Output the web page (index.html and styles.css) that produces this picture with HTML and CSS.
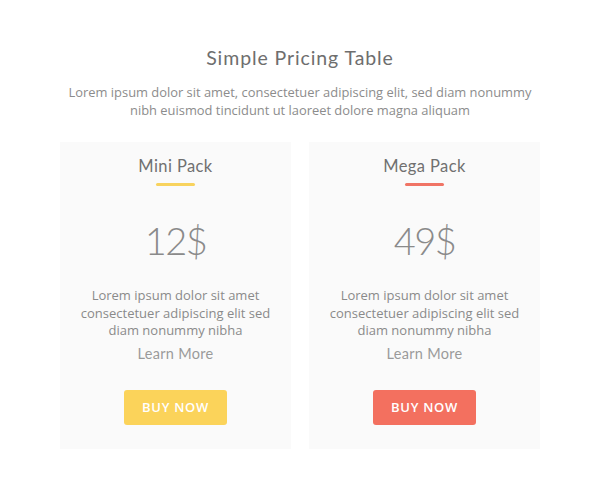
FILE: index.html
```html
<!DOCTYPE html>
<html lang="en">
<head>
<meta charset="utf-8">
<title>Simple Pricing Table</title>
<link rel="stylesheet" href="styles.css">
</head>
<body>
<main class="page">
  <h1 class="title">Simple Pricing Table</h1>
  <p class="subtitle">Lorem ipsum dolor sit amet, consectetuer adipiscing elit, sed diam nonummy nibh euismod tincidunt ut laoreet dolore magna aliquam</p>
  <div class="plans">
    <section class="card card-mini">
      <h2 class="plan-name">Mini Pack</h2>
      <div class="bar"></div>
      <div class="price">12$</div>
      <p class="desc">Lorem ipsum dolor sit amet consectetuer adipiscing elit sed diam nonummy nibha</p>
      <a class="more" href="#">Learn More</a>
      <a class="buy" href="#">BUY NOW</a>
    </section>
    <section class="card card-mega">
      <h2 class="plan-name">Mega Pack</h2>
      <div class="bar"></div>
      <div class="price">49$</div>
      <p class="desc">Lorem ipsum dolor sit amet consectetuer adipiscing elit sed diam nonummy nibha</p>
      <a class="more" href="#">Learn More</a>
      <a class="buy" href="#">BUY NOW</a>
    </section>
  </div>
</main>
</body>
</html>
```
FILE: styles.css
```css
* { box-sizing: border-box; }
html, body { margin: 0; padding: 0; background: #ffffff; }
body { font-family: "Open Sans", "Liberation Sans", sans-serif; color: #888; }

.page {
  width: 480px;
  margin: 0 auto;
  padding-top: 44px;
  text-align: center;
}

.title {
  margin: 0;
  font-family: Lato, "Noto Sans", sans-serif;
  font-weight: 400;
  font-size: 19.5px;
  line-height: 28px;
  color: #6e6e6e;
  letter-spacing: 0.9px;
}

.subtitle {
  margin: 12px 0 0;
  font-size: 12.9px;
  line-height: 17.5px;
  color: #8c8c8c;
}

.plans {
  display: grid;
  grid-template-columns: 231px 231px;
  gap: 18px;
  margin-top: 23px;
}

.card {
  background: #fafafa;
  padding: 12px 12px 24px;
  display: flex;
  flex-direction: column;
  align-items: center;
}

.plan-name {
  margin: 0;
  font-family: Lato, "Noto Sans", sans-serif;
  font-weight: 400;
  font-size: 16.5px;
  line-height: 24px;
  color: #707070;
  letter-spacing: 0.4px;
}

.bar {
  width: 39px;
  height: 3px;
  margin-top: 5px;
  border-radius: 2px;
}
.card-mini .bar { background: #f8d35e; }
.card-mega .bar { background: #f07465; }

.price {
  margin-top: 31px;
  font-family: Lato, "Noto Sans", sans-serif;
  font-weight: 300;
  font-size: 38px;
  line-height: 46px;
  color: #8a8a8a;
  letter-spacing: -1.5px;
}

.desc {
  margin: 24px 0 0;
  font-size: 13px;
  line-height: 17.5px;
  color: #8a8a8a;
}

.more {
  margin-top: 4px;
  font-family: Lato, "Noto Sans", sans-serif;
  font-size: 14.5px;
  line-height: 20px;
  color: #9a9a9a;
  text-decoration: none;
  letter-spacing: 0.3px;
}

.buy {
  margin-top: 26px;
  width: 103px;
  height: 35px;
  display: flex;
  align-items: center;
  justify-content: center;
  border-radius: 3px;
  font-size: 13px;
  font-weight: 600;
  letter-spacing: 0.7px;
  color: #ffffff;
  text-decoration: none;
}
.card-mini .buy { background: #fbd35a; }
.card-mega .buy { background: #f3705f; }
```
